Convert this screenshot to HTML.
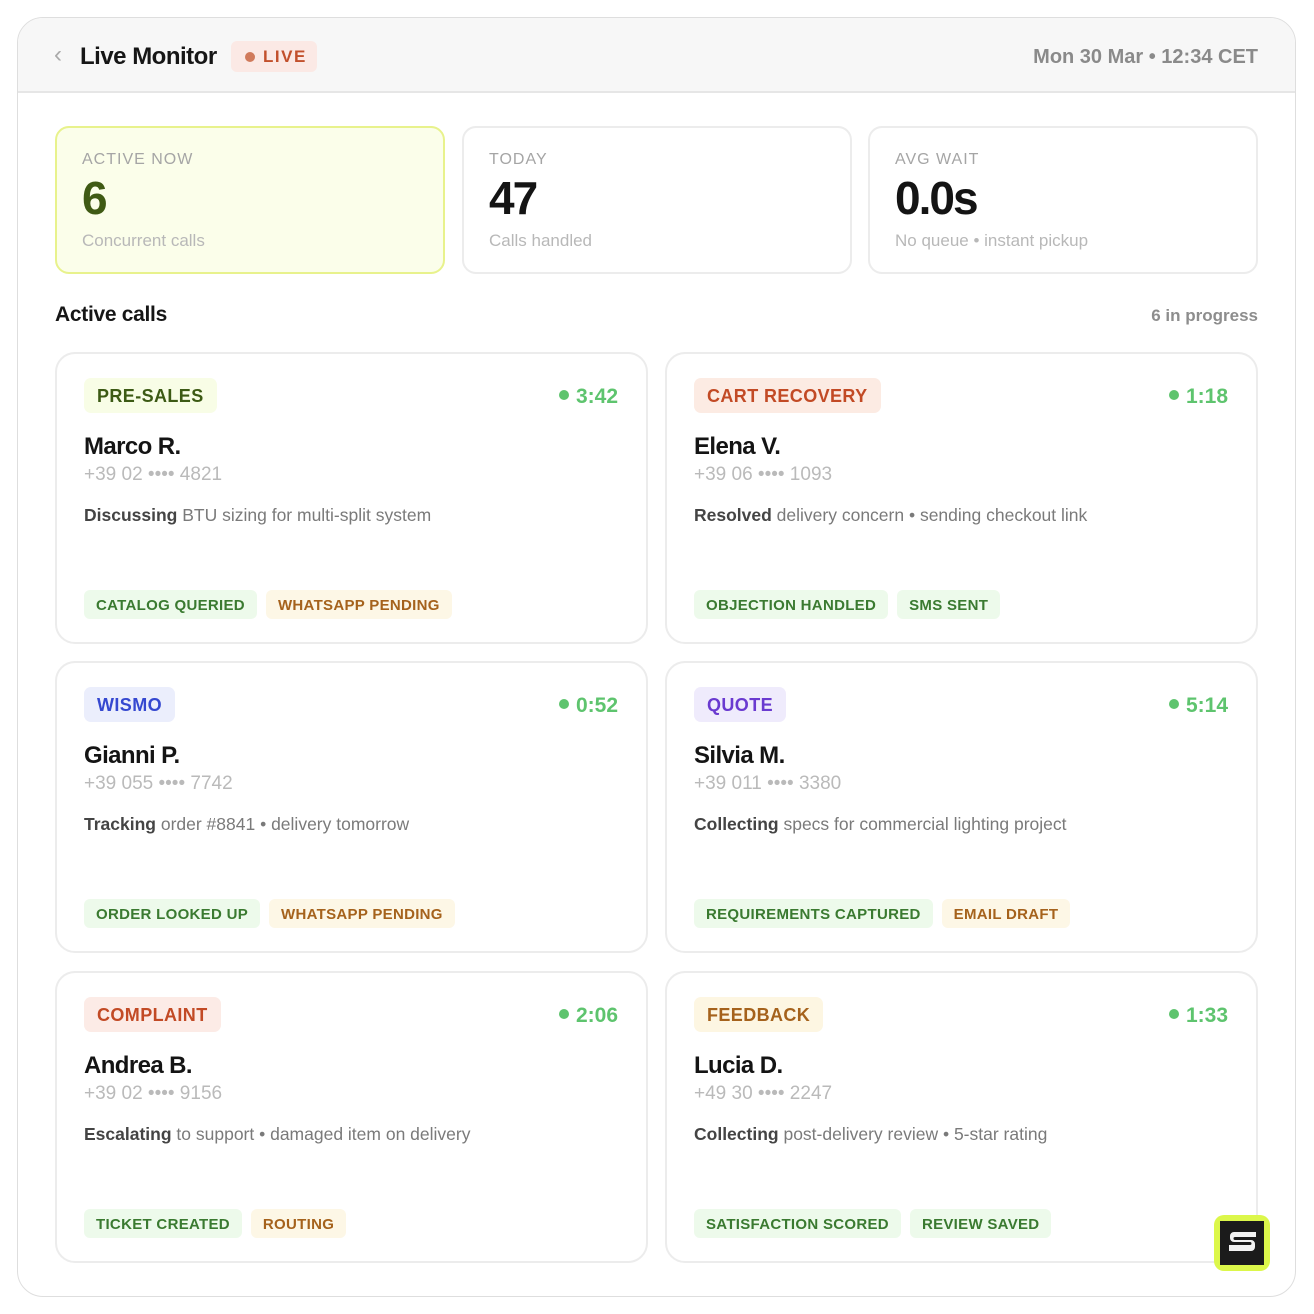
<!DOCTYPE html>
<html><head><meta charset="utf-8"><style>
*{box-sizing:border-box;margin:0;padding:0}
body{width:1314px;height:1314px;background:#fff;font-family:"Liberation Sans",sans-serif;position:relative;overflow:hidden}
.frame{position:absolute;left:17px;top:17px;width:1279px;height:1280px;border:1px solid #dedede;border-radius:26px;overflow:hidden;background:#fff}
.hdr{position:absolute;left:0;top:0;right:0;height:75px;background:#f7f7f7;border-bottom:2px solid #e6e6e6}
.back{position:absolute;left:36px;top:23px;font-size:24px;color:#aaa}
.title{position:absolute;left:62px;top:25px;font-size:24px;font-weight:bold;color:#161616;letter-spacing:-0.5px}
.live{position:absolute;left:213px;top:23px;width:86px;height:31px;background:#fbe9e5;border-radius:6px;color:#c2502c;font-size:17px;font-weight:bold;letter-spacing:1.5px;padding:6px 0 0 32px}
.live:before{content:"";position:absolute;left:14px;top:11px;width:10px;height:10px;border-radius:50%;background:#d07a5b}
.date{position:absolute;right:37px;top:28px;font-size:20px;font-weight:bold;color:#8a8a8a}
.stat{position:absolute;top:108px;width:390px;height:148px;border:2px solid #ececec;border-radius:14px;padding:23px 0 0 25px}
.stat .l{font-size:16px;color:#a5a5a5;letter-spacing:1px}
.stat .v{font-size:46px;font-weight:bold;color:#141414;margin-top:3px;letter-spacing:-2px;line-height:52px}
.stat .s{font-size:17px;color:#b8b8b8;margin-top:7px}
.sec{position:absolute;left:37px;top:285px;font-size:21px;font-weight:bold;color:#161616;letter-spacing:-0.3px}
.prog{position:absolute;right:37px;top:288px;font-size:17px;font-weight:bold;color:#8d8d8d}
.card{position:absolute;width:593px;height:292px;border:2px solid #ececec;border-radius:20px}
.tag{position:absolute;left:27px;top:24px;height:35px;border-radius:7px;font-size:18px;font-weight:bold;letter-spacing:0.4px;padding:8px 13px 0}
.time{position:absolute right:28px;top:31px;font-size:21px;font-weight:bold;color:#5ec46e}
.time{position:absolute;right:28px}
.time:before{content:"";display:inline-block;width:10px;height:10px;border-radius:50%;background:#5ec46e;margin-right:7px;vertical-align:3px}
.nm{position:absolute;left:27px;top:79px;font-size:24px;font-weight:bold;color:#141414;letter-spacing:-0.6px}
.ph{position:absolute;left:27px;top:110px;font-size:19px;color:#bababa}
.ds{position:absolute;left:27px;top:151px;font-size:17.5px;color:#7a7a7a}
.ds b{color:#444}
.chips{position:absolute;left:27px;top:236px;display:flex;gap:9px}
.chip{height:29px;border-radius:6px;font-size:15px;font-weight:bold;letter-spacing:0.3px;padding:7px 12px 0}
.g{background:#edfaeb;color:#3a7a30}.o{background:#fdf7e6;color:#a5621c}
.logo{position:absolute;left:1214px;top:1215px;width:56px;height:56px;background:#dcf74a;border-radius:10px;padding:6px}
.logo div{width:44px;height:44px;background:#1b1b1b}
</style></head><body>
<div class="frame">
<div class="hdr"><span class="back">‹</span><span class="title">Live Monitor</span><span class="live">LIVE</span><span class="date">Mon 30 Mar • 12:34 CET</span></div>
<div class="stat" style="left:37px;background:#fbfeea;border-color:#e8f28c"><div class="l">ACTIVE NOW</div><div class="v" style="color:#3f5a14">6</div><div class="s">Concurrent calls</div></div>
<div class="stat" style="left:444px"><div class="l">TODAY</div><div class="v">47</div><div class="s">Calls handled</div></div>
<div class="stat" style="left:850px"><div class="l">AVG WAIT</div><div class="v">0.0s</div><div class="s">No queue • instant pickup</div></div>
<div class="sec">Active calls</div><div class="prog">6 in progress</div>

<div class="card" style="left:37px;top:334px"><span class="tag" style="background:#f8fde6;color:#3c5a14">PRE-SALES</span><span class="time">3:42</span><div class="nm">Marco R.</div><div class="ph">+39 02 •••• 4821</div><div class="ds"><b>Discussing</b> BTU sizing for multi-split system</div><div class="chips"><span class="chip g">CATALOG QUERIED</span><span class="chip o">WHATSAPP PENDING</span></div></div>
<div class="card" style="left:647px;top:334px"><span class="tag" style="background:#fcebe3;color:#c24a25">CART RECOVERY</span><span class="time">1:18</span><div class="nm">Elena V.</div><div class="ph">+39 06 •••• 1093</div><div class="ds"><b>Resolved</b> delivery concern • sending checkout link</div><div class="chips"><span class="chip g">OBJECTION HANDLED</span><span class="chip g">SMS SENT</span></div></div>

<div class="card" style="left:37px;top:643px"><span class="tag" style="background:#ebeefc;color:#3548d0">WISMO</span><span class="time">0:52</span><div class="nm">Gianni P.</div><div class="ph">+39 055 •••• 7742</div><div class="ds"><b>Tracking</b> order #8841 • delivery tomorrow</div><div class="chips"><span class="chip g">ORDER LOOKED UP</span><span class="chip o">WHATSAPP PENDING</span></div></div>
<div class="card" style="left:647px;top:643px"><span class="tag" style="background:#efebfc;color:#6a3ad0">QUOTE</span><span class="time">5:14</span><div class="nm">Silvia M.</div><div class="ph">+39 011 •••• 3380</div><div class="ds"><b>Collecting</b> specs for commercial lighting project</div><div class="chips"><span class="chip g">REQUIREMENTS CAPTURED</span><span class="chip o">EMAIL DRAFT</span></div></div>

<div class="card" style="left:37px;top:953px"><span class="tag" style="background:#fcebe6;color:#c24a25">COMPLAINT</span><span class="time">2:06</span><div class="nm">Andrea B.</div><div class="ph">+39 02 •••• 9156</div><div class="ds"><b>Escalating</b> to support • damaged item on delivery</div><div class="chips"><span class="chip g">TICKET CREATED</span><span class="chip o">ROUTING</span></div></div>
<div class="card" style="left:647px;top:953px"><span class="tag" style="background:#fdf6e2;color:#a5621c">FEEDBACK</span><span class="time">1:33</span><div class="nm">Lucia D.</div><div class="ph">+49 30 •••• 2247</div><div class="ds"><b>Collecting</b> post-delivery review • 5-star rating</div><div class="chips"><span class="chip g">SATISFACTION SCORED</span><span class="chip g">REVIEW SAVED</span></div></div>
</div>
<div class="logo"><div><svg width="44" height="44" viewBox="0 0 44 44"><path d="M36 11H14a4 4 0 0 0-4 4v2a4 4 0 0 0 4 4h16a1 1 0 0 1 0 3H9v6h22a4 4 0 0 0 4-4v-3a4 4 0 0 0-4-4H15a1 1 0 0 1 0-3h21z" fill="#f2f2f2"/></svg></div></div>
</body></html>
